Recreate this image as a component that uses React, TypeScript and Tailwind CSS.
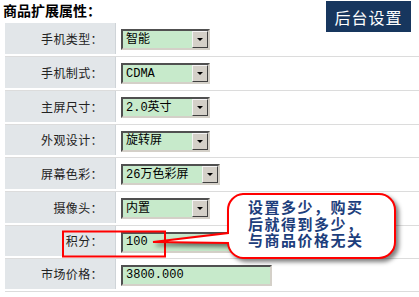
import React from "react";

type Row = { label: string; kind: "select" | "input"; value: string; width: string; h: string };

const ROWS: Row[] = [
  { label: "手机类型：", kind: "select", value: "智能", width: "w-[89px]", h: "h-[34px]" },
  { label: "手机制式：", kind: "select", value: "CDMA", width: "w-[89px]", h: "h-[34px]" },
  { label: "主屏尺寸：", kind: "select", value: "2.0英寸", width: "w-[89px]", h: "h-[34px]" },
  { label: "外观设计：", kind: "select", value: "旋转屏", width: "w-[89px]", h: "h-[33px]" },
  { label: "屏幕色彩：", kind: "select", value: "26万色彩屏", width: "w-[99px]", h: "h-[34px]" },
  { label: "摄像头：", kind: "select", value: "内置", width: "w-[89px]", h: "h-[34px]" },
  { label: "积分：", kind: "input", value: "100", width: "w-[151px]", h: "h-[33px]" },
  { label: "市场价格：", kind: "input", value: "3800.000", width: "w-[151px]", h: "h-[33px]" },
];

const FIELD_FONT = { fontFamily: '"Liberation Mono", "Noto Sans CJK SC", monospace' };

function Field({ row }: { row: Row }) {
  return (
    <div
      className={`flex h-[21px] ${row.width} items-center border-2 border-t-[#505050] border-l-[#505050] border-b-[#d4d0c8] border-r-[#d4d0c8] bg-[#c7eacb]`}
    >
      <span className="flex-1 pl-[3px] text-[12px] leading-none text-black" style={FIELD_FONT}>
        {row.value}
      </span>
      {row.kind === "select" && (
        <span className="flex h-[17px] w-[16px] items-center justify-center border border-t-[#f4f4f4] border-l-[#f4f4f4] border-b-[#404040] border-r-[#404040] bg-[#d4d0c8]">
          <span className="h-0 w-0 border-x-[3px] border-t-[3px] border-x-transparent border-t-black" />
        </span>
      )}
    </div>
  );
}

export default function App() {
  return (
    <div
      className="relative h-[297px] w-[419px] overflow-hidden bg-white text-[#222]"
      style={{ fontFamily: '"Noto Sans CJK SC", "Noto Sans", sans-serif' }}
    >
      {/* header */}
      <div className="flex h-[23px] items-start justify-between">
        <h2 className="pl-[3px] text-[14px] font-bold leading-[20px] text-black">商品扩展属性：</h2>
        <div className="relative z-10 mr-[8px] mt-[1px] flex h-[31px] w-[85px] items-center justify-center bg-[#17365e] text-[16px] tracking-[1px] text-white">
          后台设置
        </div>
      </div>

      {/* attribute table */}
      <div className="ml-[5px] flex flex-col">
        {ROWS.map((row) => (
          <div key={row.label} className={`flex ${row.h} border-b border-[#dcdcdc]`}>
            <div className="flex h-[calc(100%-2px)] w-[111px] items-center justify-end border-r border-[#cfd4d8] bg-[#e2e6e9] pr-[12px] text-[12px] tracking-[0.4px] text-[#222]">
              {row.label}
            </div>
            <div className="flex flex-1 items-center pl-[5px]">
              <Field row={row} />
            </div>
          </div>
        ))}
      </div>

      {/* annotation */}
      <svg className="pointer-events-none absolute inset-0" width="419" height="297" viewBox="0 0 419 297">
        <rect x="63" y="231.5" width="102" height="25" fill="none" stroke="#ff0000" strokeWidth="2" />
        <path
          d="M243 194 H379 A16 16 0 0 1 395 210 V242 A16 16 0 0 1 379 258 H243 A16 16 0 0 1 228 243 L153 242 L228 233 V210 A16 16 0 0 1 243 194 Z"
          fill="#ffffff"
          stroke="#ff0000"
          strokeWidth="2"
          style={{ filter: "drop-shadow(3px 3px 2px rgba(0,0,0,0.5))" }}
        />
      </svg>
      <div className="absolute left-[248px] top-[199px] text-[15px] font-bold leading-[16.5px] tracking-[1.5px] text-[#1d3e7c]">
        <p>设置多少，购买</p>
        <p>后就得到多少，</p>
        <p>与商品价格无关</p>
      </div>
    </div>
  );
}
